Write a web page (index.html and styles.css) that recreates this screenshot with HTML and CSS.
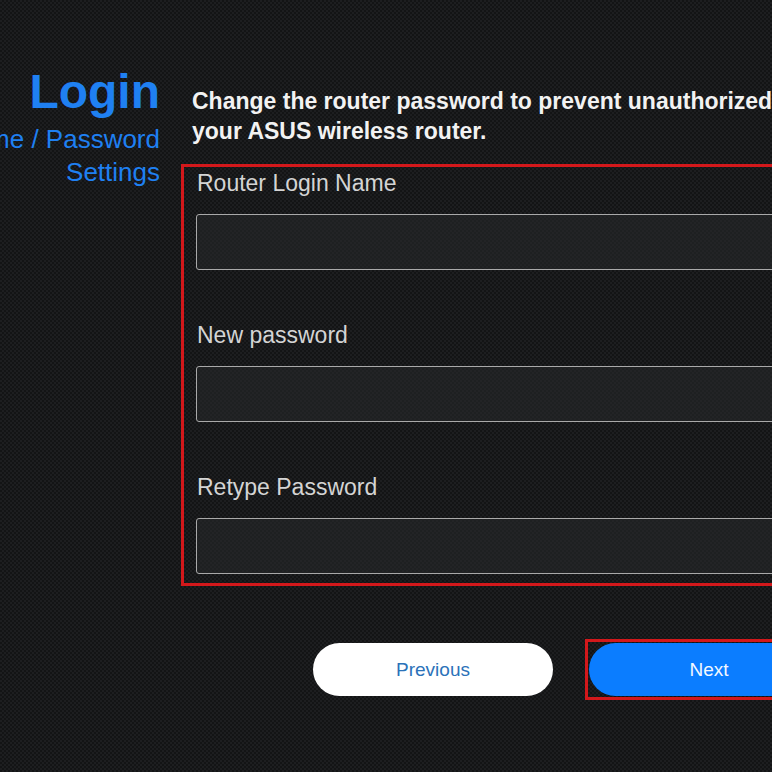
FILE: index.html
```html
<!DOCTYPE html>
<html lang="en">
<head>
<meta charset="utf-8">
<title>Login Name / Password Settings</title>
<link rel="stylesheet" href="styles.css">
</head>
<body>
<div class="page">
  <aside class="side">
    <h1 class="side-title">Login</h1>
    <p class="side-sub">Login Name / Password<br>Settings</p>
  </aside>
  <main class="main">
    <p class="intro">Change the router password to prevent unauthorized access to<br>your ASUS wireless router.</p>
    <div class="fields">
      <label class="field">
        <span class="field-label">Router Login Name</span>
        <input class="field-input" type="text">
      </label>
      <label class="field">
        <span class="field-label">New password</span>
        <input class="field-input" type="password">
      </label>
      <label class="field">
        <span class="field-label">Retype Password</span>
        <input class="field-input" type="password">
      </label>
    </div>
    <div class="actions">
      <button class="btn btn-prev" type="button">Previous</button>
      <span class="next-wrap"><button class="btn btn-next" type="button">Next</button></span>
    </div>
  </main>
</div>
</body>
</html>
```
FILE: styles.css
```css
html, body {
  margin: 0;
  padding: 0;
}
body {
  width: 772px;
  height: 772px;
  overflow: hidden;
  background-color: #1d1e20;
  background-image:
    linear-gradient(45deg, rgba(0,0,0,0.35) 25%, transparent 25%, transparent 75%, rgba(0,0,0,0.35) 75%),
    linear-gradient(45deg, rgba(0,0,0,0.35) 25%, transparent 25%, transparent 75%, rgba(0,0,0,0.35) 75%);
  background-size: 4px 4px;
  background-position: 0 0, 2px 2px;
  font-family: "Liberation Sans", Arial, sans-serif;
}
.page {
  display: flex;
  align-items: flex-start;
  margin-left: -140px;
  width: 1200px;
}
.side {
  width: 300px;
  flex: none;
  text-align: right;
  padding-top: 64px;
}
.side-title {
  margin: 0;
  font-size: 48px;
  font-weight: bold;
  line-height: 56px;
  color: #1f80f2;
}
.side-sub {
  margin: 3px 0 0;
  font-size: 26px;
  line-height: 33px;
  color: #1f80f2;
  white-space: nowrap;
}
.main {
  width: 784px;
  flex: none;
  margin-left: 21px;
  padding-top: 86px;
}
.intro {
  margin: 0 0 18px 11px;
  font-size: 23px;
  font-weight: bold;
  line-height: 30px;
  color: #f2f2f2;
  white-space: nowrap;
}
.fields {
  border: 3px solid #d3181b;
  padding: 3px 12px 9px;
  display: flex;
  flex-direction: column;
  gap: 52px;
}
.field {
  display: flex;
  flex-direction: column;
  gap: 18px;
}
.field-label {
  font-size: 23px;
  line-height: 26px;
  color: #d4d4d4;
  padding-left: 1px;
}
.field-input {
  box-sizing: border-box;
  height: 56px;
  width: 100%;
  margin: 0;
  border: 1px solid #a9a9a9;
  border-radius: 3px;
  background: rgba(40,41,43,0.55);
  color: #fff;
  font-family: inherit;
  font-size: 18px;
  padding: 0 12px;
}
.actions {
  display: flex;
  justify-content: center;
  align-items: center;
  gap: 32px;
  margin-top: 53px;
}
.btn {
  width: 240px;
  height: 53px;
  border: none;
  border-radius: 27px;
  font-family: inherit;
  font-size: 19px;
  cursor: pointer;
}
.btn-prev {
  background: #ffffff;
  color: #2b72b9;
}
.next-wrap {
  display: inline-flex;
  padding: 1px;
  border: 3px solid #d3181b;
}
.btn-next {
  background: #0b7dff;
  color: #f4f8ff;
}
```
